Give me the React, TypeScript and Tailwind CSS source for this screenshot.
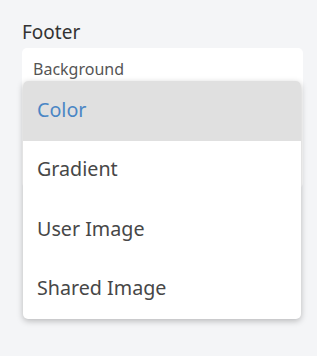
import React from "react";

export default function App() {
  const items = ["Color", "Gradient", "User Image", "Shared Image"];
  return (
    <div className="w-[317px] h-[356px] bg-[#f4f5f7] pt-[19px] px-[22px]" style={{ fontFamily: '"Noto Sans", sans-serif' }}>
      <div className="text-[19px] leading-[26px] text-[#333]">Footer</div>
      <div className="relative mt-[3px] w-[281px] h-[140px] bg-white rounded-[5px]">
        <div className="pl-[11px] pt-[10px] text-[16px] leading-[22px] text-[#555]">Background</div>
        <div className="absolute left-[1px] top-[33px] w-[278px] bg-white rounded-[5px] shadow-[0_2px_6px_rgba(0,0,0,0.25)] overflow-hidden">
          {items.map((it, i) => (
            <div
              key={it}
              className={`h-[59.5px] flex items-center pl-[14px] pb-[2px] text-[19.7px] ${i === 0 ? "bg-[#e0e0e0] text-[#4a86c5]" : "text-[#474747]"}`}
            >
              {it}
            </div>
          ))}
        </div>
      </div>
    </div>
  );
}
